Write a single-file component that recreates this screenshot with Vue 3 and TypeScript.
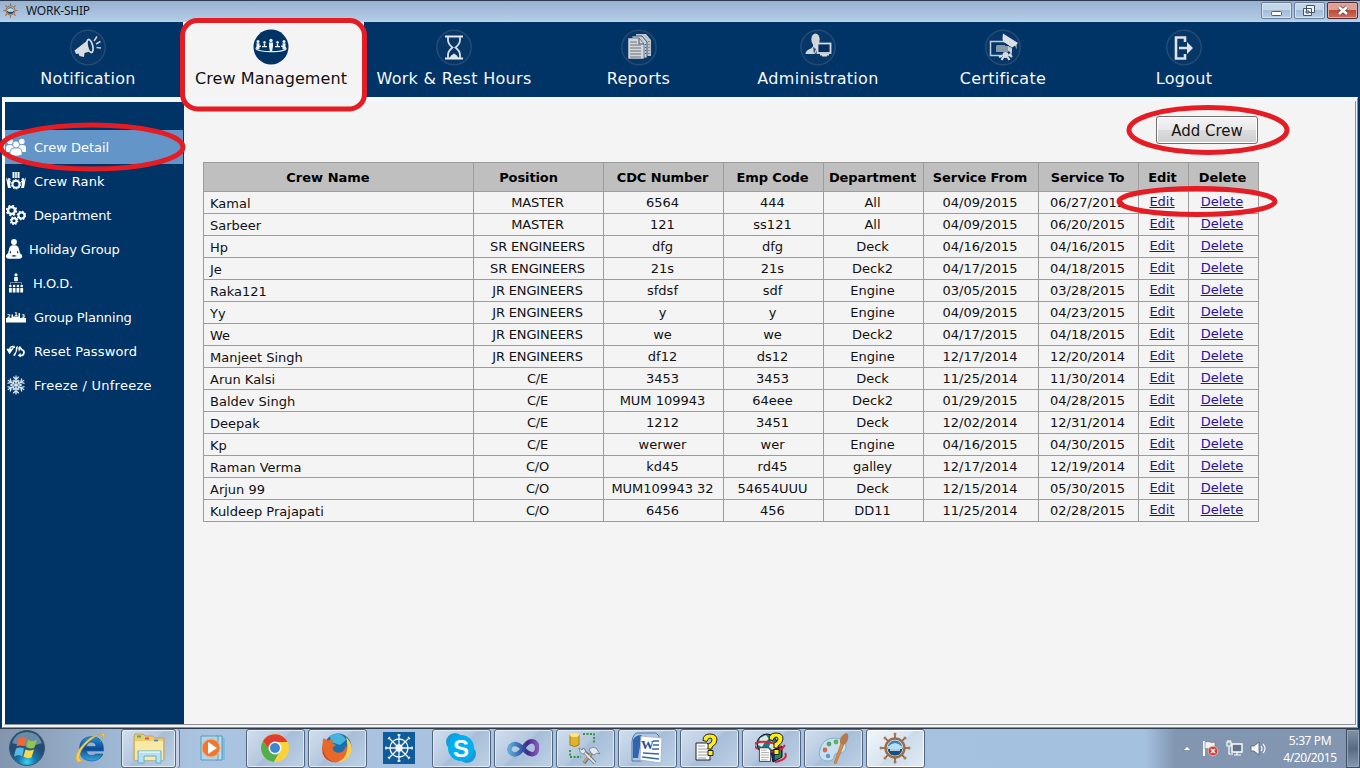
<script setup lang="ts">
interface NavItem { label: string; icon: string; active?: boolean }
interface SideItem { label: string; icon: string; cls?: string }
interface TaskItem { name: string; icon: string; kind: string }

const navItems: NavItem[] = [
  { label: 'Notification', icon: '<path d="M4.500 21.500L18 11L23 21.500L14.500 24L14 28L9.500 27L8.500 24.500L6 25Z" fill="#d9dde2"/><ellipse cx="20" cy="17" rx="3.600" ry="7.600" transform="rotate(-14 20 17)" fill="#d9dde2"/><ellipse cx="20" cy="17" rx="1.800" ry="5.600" transform="rotate(-14 20 17)" fill="#063768"/><path d="M24 12L27 7.500M26 15L30.500 12.500M26.500 18.500L31 19" stroke="#c5cdd6" stroke-width="1.600"/>' },
  { label: 'Crew Management', active: true, icon: '<circle cx="18" cy="18" r="17.500" fill="#003366"/><ellipse cx="18" cy="19.500" rx="15" ry="3.200" fill="none" stroke="#e8eef4" stroke-width="1.200"/><path d="M8 13h20v5.500H8z" fill="#003366"/><g fill="#edf1f5"><circle cx="18" cy="11.500" r="1.700"/><path d="M16 13.500h4v4l-1 5h-2l-1-5z"/><circle cx="5" cy="12.500" r="1.500"/><path d="M3.500 14.200h3v6h-3z"/><circle cx="31" cy="12.500" r="1.500"/><path d="M29.500 14.200h3v6h-3z"/><circle cx="11.500" cy="13.300" r="1.200"/><path d="M10.800 14.500h1.400V17H14v1.200H9V17h1.800zM25.200 14.500h-1.400V17H22v1.200h5V17h-1.800z"/><circle cx="24.500" cy="13.300" r="1.200"/></g>' },
  { label: 'Work & Rest Hours', icon: '<path d="M9 7.500h18M9 29.500h18" stroke="#e6e9ec" stroke-width="2"/><path d="M12 8v3q0 4 4.500 7.500Q12 22 12 26v3M24 8v3q0 4-4.500 7.500Q24 22 24 26v3" fill="none" stroke="#d8dde3" stroke-width="1.800"/><path d="M13.500 29q1-3 4.500-4.500q3.500 1.500 4.500 4.500z" fill="#e1e5e9"/>' },
  { label: 'Reports', icon: '<path d="M15 5h10l5 6v16H15z" fill="#bfc5cb"/><path d="M11 7h10l5 6v16H11z" fill="#c9cdd2" stroke="#183f68" stroke-width=".8"/><path d="M7 9h11l5 6v15H7z" fill="#d5d7da" stroke="#183f68" stroke-width=".6"/><path d="M18 9v6h5" fill="none" stroke="#42566c"/><path d="M9 13h7M9 16h11M9 19h11M9 22h11M9 25h11M9 28h11" stroke="#64717e" stroke-width="1"/><path d="M24.500 15v12M28 12v13" stroke="#4a5d72" stroke-dasharray="1 2"/>' },
  { label: 'Administration', icon: '<ellipse cx="15.500" cy="10.500" rx="4.200" ry="6" fill="#d2d5d8"/><path d="M13 14h5v5l-3 6H5.500q0-4 5.500-5.500l2-2z" fill="#d2d5d8"/><path d="M13 18l3 2-2 5z" fill="#36577a"/><rect x="17.500" y="14.500" width="13" height="9.500" fill="#052f5c" stroke="#d8dbde" stroke-width="1.800"/><path d="M20 25h9v1.500h-9zM22 26h5v1.500h-5z" fill="#d8dbde"/>' },
  { label: 'Certificate', icon: '<path d="M26 20v6.500H5.500v-14H20" fill="none" stroke="#c2cbd3" stroke-width="1.500"/><path d="M12 16h8v1h3v6H11v-6z" fill="#8798a8"/><path d="M18 4.500l15 9.500-1.500 1.500v5l-1.300-4-3.200 2-9-6-.5-3z" fill="#dce0e3"/><path d="M23 17l4 2v5l-4-2z" fill="#c6ced6"/><circle cx="20.500" cy="26" r="3" fill="#d8dde1"/><path d="M18.500 28l-2 3M22.500 28l2 3M24 25l3 3M17 27l-3 1" stroke="#d8dde1" stroke-width="2.200"/>' },
  { label: 'Logout', icon: '<path d="M19 13V8.500h-9v21h9V25" fill="none" stroke="#dfe3e7" stroke-width="2.600"/><path d="M13 17.800h8V13l6 6-6 6v-4.700h-8z" fill="#e0e4e8"/>' }
]

const flakeArm = '<path d="M10 10V.5M7.200 1.800L10 4.500l2.800-2.700M7.500 5L10 7.500 12.500 5"/>'
const flake = [0, 60, 120, 180, 240, 300].map((a) => `<g transform="rotate(${a} 10 10)">${flakeArm}</g>`).join('')

const sideItems: SideItem[] = [
  { label: 'Crew Detail', icon: '<circle cx="4" cy="4.500" r="2.800"/><circle cx="15.800" cy="4.500" r="2.800"/><path d="M0 15V11q0-3 3-3h3l2 3-3 4zM20 15V11q0-3-3-3h-3l-2 3 3 4z"/><g stroke="#6495c8" stroke-width=".8"><circle cx="10" cy="7.500" r="3.500"/><path d="M4 15q0-4 4-4h4q4 0 4 4v3q-6 2.500-12 0z"/></g>' },
  { label: 'Crew Rank', icon: '<path d="M6.500 1h2v6h-2zM9.200 1h1.600v6H9.200zM11.500 1h2v6h-2z"/><circle cx="10" cy="13.200" r="3.500" fill="none" stroke="#fff" stroke-width="2"/><circle cx="10" cy="13.200" r="4.800" fill="none" stroke="#fff" stroke-dasharray="1.600 1.400"/><circle cx="3" cy="8.500" r="1.500"/><circle cx="17" cy="8.500" r="1.500"/><path d="M0 6l2 4h3l-1 3 1 4H2l-1-5zM20 6l-2 4h-3l1 3-1 4h3l1-5z"/>' },
  { label: 'Department', icon: '<g fill="none" stroke="#fff"><circle cx="5.500" cy="5.500" r="3.500" stroke-width="2.400"/><circle cx="5.500" cy="5.500" r="5" stroke-width="1.500" stroke-dasharray="2 1.930"/><circle cx="15.500" cy="10.500" r="3" stroke-width="2"/><circle cx="15.500" cy="10.500" r="4.200" stroke-width="1.300" stroke-dasharray="1.600 1.700"/><circle cx="8" cy="15.800" r="2.500" stroke-width="1.900"/><circle cx="8" cy="15.800" r="3.700" stroke-width="1.300" stroke-dasharray="1.450 1.450"/></g>' },
  { label: 'Holiday Group', cls: 'holiday', icon: '<circle cx="8" cy="3" r="2.900"/><path d="M6.500 6.300h3q3 .7 3.500 4l1 4q3 2 2 4-1 1.500-3 1.500H3q-2 0-3-1.500-1-2 2-4l1-4q.5-3.300 3.500-4z"/><path d="M3.500 13.500L5 11.500v3zM12.500 13.500L11 11.500v3zM5 17l3-1 3 1-3 .8z" fill="#003366"/>' },
  { label: 'H.O.D.', cls: 'hod', icon: '<circle cx="10" cy="1.800" r="1.600"/><path d="M8.200 4h3.600v4H8.200z"/><path d="M10 7v3M4.500 11.500V9.500h11v2" fill="none" stroke="#fff" stroke-width=".7" opacity=".6"/><circle cx="4.300" cy="13" r="1.300"/><circle cx="8.100" cy="13" r="1.300"/><circle cx="11.900" cy="13" r="1.300"/><circle cx="15.700" cy="13" r="1.300"/><path d="M3 15h2.800v4.500H3zM6.700 15h2.800v4.500H6.700zM10.500 15h2.800v4.500h-2.800zM14.300 15h2.800v4.500h-2.800z"/>' },
  { label: 'Group Planning', icon: '<path d="M0 11h6V9.500h8V11h6v4.500H0z"/><g font-family="DejaVu Sans" font-size="5" font-weight="bold"><text x="1" y="10.500">2</text><text x="8.200" y="8.800">1</text><text x="15.500" y="10.500">3</text></g><path d="M5.500 7.500h1.500v4H5.500zM12.500 6h1.500v5h-1.500z"/>' },
  { label: 'Reset Password', icon: '<path d="M8.500 5.500Q4 4.500 3.500 9M1.500 8.500h4.600L3.500 12zM6 7.500L9 6" stroke="#fff" stroke-width="1.300" fill="none"/><path d="M1.200 8.500h5L3.500 12.500zM12 5l-1 5-2 5-2-.7 2.600-3.600L10 6zM14 5l3 4-3-.6-1 2.600-.9-4z"/><path d="M15 8.500q4 1 2.700 4.200Q17 15 13.500 14.500" stroke="#fff" stroke-width="1.800" fill="none"/><path d="M14.500 11.800l-2.700 2.800 3.200 1.600z"/>' },
  { label: 'Freeze / Unfreeze', icon: '<g fill="none" stroke="#dce7f2" stroke-width="1.300">' + flake + '</g>' }
]

const headers: string[] = ['Crew Name', 'Position', 'CDC Number', 'Emp Code', 'Department', 'Service From', 'Service To', 'Edit', 'Delete']
const widths: number[] = [270, 130, 120, 100, 100, 115, 100, 50, 70]
const rows: string[][] = [
  ['Kamal', 'MASTER', '6564', '444', 'All', '04/09/2015', '06/27/2015'],
  ['Sarbeer', 'MASTER', '121', 'ss121', 'All', '04/09/2015', '06/20/2015'],
  ['Hp', 'SR ENGINEERS', 'dfg', 'dfg', 'Deck', '04/16/2015', '04/16/2015'],
  ['Je', 'SR ENGINEERS', '21s', '21s', 'Deck2', '04/17/2015', '04/18/2015'],
  ['Raka121', 'JR ENGINEERS', 'sfdsf', 'sdf', 'Engine', '03/05/2015', '03/28/2015'],
  ['Yy', 'JR ENGINEERS', 'y', 'y', 'Engine', '04/09/2015', '04/23/2015'],
  ['We', 'JR ENGINEERS', 'we', 'we', 'Deck2', '04/17/2015', '04/18/2015'],
  ['Manjeet Singh', 'JR ENGINEERS', 'df12', 'ds12', 'Engine', '12/17/2014', '12/20/2014'],
  ['Arun Kalsi', 'C/E', '3453', '3453', 'Deck', '11/25/2014', '11/30/2014'],
  ['Baldev Singh', 'C/E', 'MUM 109943', '64eee', 'Deck2', '01/29/2015', '04/28/2015'],
  ['Deepak', 'C/E', '1212', '3451', 'Deck', '12/02/2014', '12/31/2014'],
  ['Kp', 'C/E', 'werwer', 'wer', 'Engine', '04/16/2015', '04/30/2015'],
  ['Raman Verma', 'C/O', 'kd45', 'rd45', 'galley', '12/17/2014', '12/19/2014'],
  ['Arjun 99', 'C/O', 'MUM109943 32', '54654UUU', 'Deck', '12/15/2014', '05/30/2015'],
  ['Kuldeep Prajapati', 'C/O', '6456', '456', 'DD11', '11/25/2014', '02/28/2015']
]

const helm = '<g stroke="#80502f" stroke-width="1.500"><path d="M16 1v30M1 16h30M5.500 5.500l21 21M26.500 5.500l-21 21"/></g><g fill="#a97950"><circle cx="16" cy="2" r="1.500"/><circle cx="16" cy="30" r="1.500"/><circle cx="2" cy="16" r="1.500"/><circle cx="30" cy="16" r="1.500"/><circle cx="6" cy="6" r="1.500"/><circle cx="26" cy="6" r="1.500"/><circle cx="6" cy="26" r="1.500"/><circle cx="26" cy="26" r="1.500"/></g><circle cx="16" cy="16" r="9.500" fill="#d6e5ef" stroke="#a06b43" stroke-width="2.400"/><circle cx="16" cy="16" r="7.500" fill="#3683b7"/><path d="M8.500 16h15q-1 7.500-7.500 7.500T8.500 16" fill="#174f81"/><path d="M9 14.500q7-7 14 0v2.500H9z" fill="#b7ddf0"/><path d="M11 18h10" stroke="#e8f3f8" stroke-width="1.500"/>'
const page = '<path d="M3 11h11l3 3v14H3z" fill="#fff" stroke="#222"/><path d="M5 14h7M5 17h10M5 20h10M5 23h10M5 26h8" stroke="#999"/>'
const question = '<path d="M10 8.500q0-6.500 7-6.500t7 6q0 4-5 7v2h-4v-5q4-1 4-4 0-2-2-2t-3 3.500z" fill="#ffee16" stroke="#222"/><path d="M15 18.500h5v5h-5z" fill="#ffee16" stroke="#222"/>'

const tasks: TaskItem[] = [
  { name: 'ie', kind: 'plain', icon: '<defs><linearGradient id="ieBlue" x2="0" y2="1"><stop stop-color="#2595d9"/><stop offset=".5" stop-color="#084b95"/><stop offset="1" stop-color="#32a9df"/></linearGradient></defs><path d="M30 22q-3 7-11.500 7Q6.500 28.500 6.500 17T18 4.500q13 0 12.500 14.500H13.500q.5 4.500 5 4.500 3 0 4-1.500zM13.500 14.500h9.500q-.5-4.500-4.500-4.500t-5 4.500z" fill="url(#ieBlue)" stroke="#17538f" stroke-width=".6"/><path d="M27 10Q33 3 27.500 2.500 19 2 9.500 13T4 29.500q2 2 7-2-4.500 1-4.500-1Q6 18 16 9.500T31 1q2.500 3-4 9z" fill="#f5cc58" stroke="#c89b31" stroke-width=".5"/>' },
  { name: 'explorer', kind: 'button stacked', icon: '<path d="M1 5l1-3h8l2 2h8l2 2h9v22H1z" fill="#eacb74" stroke="#c2a45a"/><path d="M2 9h28v19H2z" fill="#f9e9a5"/><path d="M4 3.500h4v2H4z" fill="#50b44f"/><path d="M12 5.500h4v2h-4z" fill="#d85346"/><path d="M21 7.500h4v2h-4z" fill="#4397cb"/><path d="M5 31V19h23v12h-5v-7H11v7z" fill="#b6e1f2" stroke="#5faed1"/><path d="M6 20h21" stroke="#fff"/>' },
  { name: 'player', kind: 'plain', icon: '<path d="M23 5l5 1v22h-5z" fill="#80bcdc"/><path d="M19 4h6v24h-6z" fill="#b9dded" stroke="#5898bc"/><path d="M4 4h17v24H4z" fill="#aed5e9" stroke="#5d9bbf"/><circle cx="14" cy="16" r="9" fill="#ec792f" stroke="#f6b181"/><path d="M11 10l9 6-9 6z" fill="#fff"/>' },
  { name: 'chrome', kind: 'button', icon: '<circle cx="16" cy="16" r="14" fill="#fad33b"/><path d="M3.900 9A14 14 0 0 1 28.500 10H16l-5 9z" fill="#df3e31"/><path d="M3.900 9A14 14 0 0 0 15 30l6-11H11z" fill="#54ae4d"/><path d="M28.500 10A14 14 0 0 1 15 30l6-11-2-9z" fill="#fad33b"/><circle cx="16" cy="16" r="6.500" fill="#f8faff"/><circle cx="16" cy="16" r="5" fill="#3e87cd"/>' },
  { name: 'firefox', kind: 'button', icon: '<circle cx="17" cy="15" r="13.500" fill="#1b6eaf"/><path d="M9 4Q20-2 25 8l-6 5-9-3z" fill="#45b4df"/><path d="M2.500 6l4 2.500L12 7l-1 4 4 2-3.500 2.500q1 6 7.500 5 5-1 6-7 3 5 0 10l4-8q1 8-5 12-10 6-18 0Q-1 19 2.500 6z" fill="#e8682a"/><path d="M25 5q8 8 5 16-4 9-14 9.500 9-4 10-12 1-7-1-13.500z" fill="#f7d058"/><path d="M2 12q-1 14 11 18Q4 29 1.500 21q-.5-5 .5-9z" fill="#cc3d27"/>' },
  { name: 'wheel', kind: 'plain', icon: '<path d="M0 0h32v32H0z" fill="#105b9c"/><g fill="none" stroke="#f4f8fb" stroke-width="1.300"><circle cx="16" cy="16" r="9"/><circle cx="16" cy="16" r="3"/><path d="M16 2v28M2 16h28M6 6l20 20M26 6L6 26M14.500 3h3M14.500 29h3M3 14.500v3M29 14.500v3M5 7l2-2M25 5l2 2M5 25l2 2M25 27l2-2"/></g>' },
  { name: 'skype', kind: 'button', icon: '<circle cx="10" cy="10" r="9" fill="#1a9bd7"/><circle cx="22" cy="22" r="9" fill="#1a9bd7"/><circle cx="16" cy="16" r="13" fill="#00aff0"/><text x="16" y="25" text-anchor="middle" font-family="Liberation Sans" font-weight="bold" font-size="24" fill="#fff">S</text>' },
  { name: 'studio', kind: 'button', icon: '<defs><linearGradient id="loop"><stop stop-color="#5fa9d8"/><stop offset=".4" stop-color="#3464aa"/><stop offset=".65" stop-color="#412a8b"/><stop offset="1" stop-color="#8256b5"/></linearGradient></defs><path d="M15.500 16Q8 9 3.500 14q-3 5 2 8 5 2 10-5 6-10 12-7 5 4 1 11-5 4-13-5z" fill="none" stroke="url(#loop)" stroke-width="4.500"/>' },
  { name: 'database', kind: 'button', icon: '<path d="M1 3v10q5 3 9 0V3" fill="#dfb42c" stroke="#a77e19"/><ellipse cx="5.500" cy="3" rx="4.500" ry="2" fill="#ffe47a"/><path d="M14 2h11v10M1 18v7h11" fill="none" stroke="#2a9939" stroke-width="1.800" stroke-dasharray="2 1.500"/><path d="M15 31l10-13M13 17l13 14" stroke="#6d7884" stroke-width="3.500"/><path d="M15 30l10-12" stroke="#d5a563" stroke-width="1.800"/><path d="M13 18l13 13" stroke="#eef3f6" stroke-width="1.700"/><path d="M20 17q4-3 7-1l4 6-3-1-3 2-3-2zM10 16l3 2 2-2q3 4 0 6-4 0-5-6z" fill="#e5e9ed" stroke="#6d7984" stroke-width=".8"/>' },
  { name: 'word', kind: 'button', icon: '<path d="M4 2Q4 1 7 1h18l3 3-2 22-17 3H1V10q0-5 3-8z" fill="#aec7e3" stroke="#4e78ac"/><path d="M2 8q2-5 9-5L7 26H2z" fill="#3265ac"/><path d="M10 4l21 2-1 25-21-3z" fill="#fff" stroke="#a7bace"/><text x="10" y="17" font-family="Liberation Serif" font-weight="bold" font-size="13" fill="#244f94">W</text><path d="M22 9h6M22 13h6M21 17h7M12 21l16 1M11 25l17 2" stroke="#3768a7" stroke-width="1.600"/>' },
  { name: 'help', kind: 'button', icon: page + question },
  { name: 'webhelp', kind: 'button', icon: '<circle cx="12" cy="12" r="10" fill="#147a88" stroke="#111"/><path d="M5 6l6-3 3 4-4 3-3 5-4-2zM16 9l6 4-3 6-5-4z" fill="#dde7de"/><path d="M16 19l11-5v11l-9 5z" fill="#172c79" stroke="#111"/><path d="M20 19l6-3v9l-6 3z" fill="#238d54"/><path d="M3 17Q-5 12 4 10q12-1 22 5M8 19q17 3 22-6M20 30q14-3 10-9" fill="none" stroke="#d92242" stroke-width="2"/><g transform="translate(2 7) scale(.8)">' + page + '</g><g transform="translate(4 -1)">' + question + '</g>' },
  { name: 'paint', kind: 'button', icon: '<path d="M3 17Q6 6 18 6q12 1 11 10-1 5-7 5-5 0-5 4t-8 4Q0 27 3 17z" fill="#c9e1ef" stroke="#7eb1ce"/><circle cx="8" cy="18" r="2.400" fill="#d76659"/><circle cx="12" cy="12" r="2.400" fill="#5c9e72"/><circle cx="19" cy="10" r="2.400" fill="#66ad53"/><circle cx="11" cy="24" r="2.200" fill="#569dcd"/><path d="M17 31l7-20 3 1-8 20z" fill="#dc8c38" stroke="#a46333" stroke-width=".5"/><path d="M23 11q-1-7 6-10 3 0 2 6-1 5-5 6z" fill="#b57950"/>' },
  { name: 'ship', kind: 'button current', icon: helm }
]
</script>

<template>
  <main class="desktop">
    <header class="titlebar">
      <svg class="app-logo" viewBox="0 0 32 32" v-html="helm"></svg>
      <span class="app-title">WORK-SHIP</span>
      <div class="window-buttons">
        <button aria-label="Minimize"><svg width="30" height="16"><rect x="9.500" y="8.500" width="10" height="4" rx="1" fill="#fff" stroke="#545e70" /></svg></button>
        <button aria-label="Restore"><svg width="30" height="16"><path d="M11.500 2.500h8v7h-8zM8.500 5.500h8v7h-8z" fill="#eff5fa" stroke="#46546a" /><path d="M11 8h3v2h-3z" fill="#b8cce1" stroke="#46546a" /></svg></button>
        <button class="close" aria-label="Close"><svg width="30" height="16"><path d="M11 4l8 7M19 4l-8 7" stroke="#594650" stroke-width="4.200" /><path d="M11 4l8 7M19 4l-8 7" stroke="#fff" stroke-width="2.600" /></svg></button>
      </div>
    </header>

    <nav class="topnav">
      <a v-for="item in navItems" :key="item.label" :class="['nav-item', { active: item.active }]">
        <svg class="nav-icon" viewBox="0 0 36 37">
          <circle v-if="!item.active" cx="18" cy="18.500" r="17.200" fill="#063767" stroke="#234b75" stroke-width="1.500" />
          <g v-html="item.icon"></g>
        </svg>
        <span>{{ item.label }}</span>
      </a>
    </nav>

    <section class="workspace">
      <aside class="sidebar">
        <a v-for="(item, i) in sideItems" :key="item.label" :class="['side-item', item.cls, { selected: i === 0 }]">
          <svg viewBox="0 0 20 20" v-html="item.icon"></svg><span>{{ item.label }}</span>
        </a>
      </aside>
      <div class="content">
        <div class="actions"><button class="add">Add Crew</button></div>
        <table>
          <colgroup><col v-for="(w, i) in widths" :key="i" :style="{ width: w + 'px' }"></colgroup>
          <thead><tr><th v-for="h in headers" :key="h">{{ h }}</th></tr></thead>
          <tbody>
            <tr v-for="row in rows" :key="row[0]">
              <td v-for="(cell, i) in row" :key="i">{{ cell }}</td>
              <td class="link"><a>Edit</a></td><td class="link"><a>Delete</a></td>
            </tr>
          </tbody>
        </table>
      </div>
    </section>

    <footer class="taskbar">
      <div class="start">
        <svg viewBox="0 0 38 38">
          <defs><radialGradient id="orb" cy=".9"><stop stop-color="#37d4ef" /><stop offset=".5" stop-color="#1677aa" /><stop offset="1" stop-color="#234c72" /></radialGradient></defs>
          <circle cx="19" cy="19" r="17.500" fill="url(#orb)" stroke="#365773" /><path d="M4 14Q8 3 19 3t15 11Q20 20 4 14" fill="#c0d8e4" opacity=".45" />
          <path d="M10.500 9.500q4-3 8 0l-2 8q-4-2-8 0z" fill="#f0673a" /><path d="M20 10.500q4 3 9 0l-2.500 8q-4 2-8.500-.5z" fill="#8ec54d" /><path d="M8 19.500q4-2 8 0l-2 8q-3-3-8 0z" fill="#5cb8e5" /><path d="M17.500 20.500q4 2 8.500 0l-2.500 8q-4 2-8-1z" fill="#f9d64c" />
        </svg>
      </div>
      <div v-for="task in tasks" :key="task.name" class="slot"><div :class="['task', task.kind]"><svg viewBox="0 0 32 32" v-html="task.icon"></svg></div></div>
      <div class="tray">
        <svg class="up" viewBox="0 0 8 5"><path d="M0 4.500L4 .5l4 4z" fill="#fff" stroke="#526579" stroke-width=".5" /></svg>
        <svg class="flag" viewBox="0 0 17 17"><path d="M2 1v15" stroke="#fff" stroke-width="2" /><path d="M3 2q3-1 5 0t5 0v7q-3 1-5 0t-5 0z" fill="#eef2f5" stroke="#647083" stroke-width=".6" /><circle cx="11" cy="11" r="4.800" fill="#d93a34" stroke="#f0b3ab" /><path d="M9 9l4 4M13 9l-4 4" stroke="#fff" stroke-width="1.500" /></svg>
        <svg class="network" viewBox="0 0 17 17"><path d="M6 4h10v8H6z" fill="#64758a" stroke="#fff" stroke-width="1.400" /><path d="M8 15h7M11 12v3M1 2h4v4H1zM2 0v2M4 0v2M3 6v8h4" stroke="#fff" fill="none" stroke-width="1.200" /></svg>
        <svg class="sound" viewBox="0 0 17 17"><path d="M1 6h3l5-4v13l-5-4H1z" fill="#f7f9fb" stroke="#4f6073" stroke-width=".8" /><path d="M11 6q2 2.500 0 5M13 4q4 4.500 0 9" fill="none" stroke="#f4f7fa" stroke-width="1.200" /></svg>
        <div class="clock"><span>5:37 PM</span><span>4/20/2015</span></div>
        <div class="show-desktop"></div>
      </div>
    </footer>

    <svg class="annotations" viewBox="0 0 1360 768">
      <rect x="182.500" y="20.500" width="182" height="88.500" rx="15" />
      <ellipse cx="92" cy="147" rx="91" ry="22" />
      <ellipse cx="1208" cy="130" rx="79" ry="22.500" />
      <ellipse cx="1197" cy="201.500" rx="78" ry="13" />
    </svg>
  </main>
</template>

<style>
body { margin: 0; overflow: hidden; }
</style>
<style scoped>
* { box-sizing: border-box; }
.desktop { position: relative; width: 1360px; height: 768px; background: #003366; overflow: hidden; display: flex; flex-direction: column; font-family: "DejaVu Sans", sans-serif; }
.titlebar { height: 22px; border-top: 1px solid #2b3a50; background: linear-gradient(#96b1d1, #b2cbe5 90%, #b8d7ea); display: flex; align-items: center; padding: 0 2px 0 3px; }
.app-logo { width: 15px; height: 15px; margin-bottom: 2px; }
.app-title { margin-left: 8px; padding-bottom: 2px; font: 12px "Noto Sans", sans-serif; letter-spacing: -.25px; color: #111722; }
.window-buttons { display: flex; gap: 2px; margin-left: auto; align-self: flex-start; padding-top: 1px; }
.window-buttons button { display: block; width: 31px; height: 17px; padding: 0; border: 1px solid #6b809d; border-radius: 2px; background: linear-gradient(#c5d6e9 48%, #a3bcd8 50%, #b9cee4); box-shadow: inset 0 0 0 1px #d5e2ef; overflow: hidden; }
.window-buttons svg { display: block; }
.window-buttons .close { border-color: #552a39; background: linear-gradient(#dda194 48%, #be4936 50%, #cb715c); box-shadow: inset 0 0 0 1px #e7aaa0; }
.topnav { height: 75px; flex: none; display: grid; grid-template-columns: 183px 181px 180px 189px 170px 200px 162px; background: #003366; }
.nav-item { display: flex; flex-direction: column; align-items: center; color: #f6f8fa; padding-top: 7px; font-size: 16px; letter-spacing: .3px; white-space: nowrap; }
.nav-item:first-child { padding-right: 7px; }
.nav-item.active { background: #f4f4f4; color: #111; padding-right: 5px; letter-spacing: .08px; }
.nav-icon { width: 36px; height: 37px; display: block; }
.nav-item span { line-height: 22px; margin-top: 2px; }
.workspace { height: 631px; margin: 0 2px; flex: none; display: flex; background: #f4f4f4; border-top: 5px solid #f3f6fa; border-left: 3px solid #fff; border-bottom: 4px double #8d9299; border-right: 3px double #888e95; }
.sidebar { width: 179px; height: 622px; padding-top: 28px; background: #003366; }
.side-item { width: 178px; height: 34px; padding-left: 1px; display: flex; align-items: center; color: #fff; font-size: 13px; letter-spacing: .15px; }
.side-item svg { width: 20px; height: 20px; margin-right: 8px; fill: #fff; flex: none; }
.side-item.selected { background: #6495c8; letter-spacing: 0; }
.side-item.holiday { letter-spacing: -.15px; }
.side-item.holiday svg { margin-right: 3px; }
.side-item.hod { letter-spacing: -.3px; }
.side-item.hod svg { margin-right: 7px; }
.side-item:nth-child(3), .side-item:nth-child(6) { letter-spacing: -.15px; }
.side-item:nth-child(8) { letter-spacing: .27px; }
.content { flex: 1; padding-left: 19px; }
.actions { height: 60px; padding: 14px 0 0 953px; }
.add { display: block; width: 102px; height: 28px; padding: 1px 0 0; border: 1px solid #707070; border-radius: 3px; box-shadow: inset 0 0 0 1px #fff; background: linear-gradient(#f3f3f3, #e9e9e9 48%, #dcdcdc 50%, #cecece); color: #151515; font: 15px "DejaVu Sans", sans-serif; }
table { table-layout: fixed; width: 1056px; border-spacing: 0; border-top: 1px solid #9c9c9c; border-left: 1px solid #9c9c9c; font-size: 13px; color: #111; }
th, td { padding: 0 2px 0 0; border-right: 1px solid #9c9c9c; border-bottom: 1px solid #9c9c9c; text-align: center; white-space: nowrap; line-height: 15px; }
th { height: 29px; background: #bfbfbf; color: #000; letter-spacing: -.1px; }
td { height: 22px; }
th:nth-child(1) { padding-right: 21px; letter-spacing: 0; }
th:nth-child(2) { padding-right: 20px; }
td:nth-child(1) { text-align: left; padding-left: 6px; padding-top: 2px; }
td:nth-child(2) { letter-spacing: -.15px; }
td.link { padding-right: 3px; padding-bottom: 2px; }
.link a { color: #26139a; text-decoration: underline; }
.taskbar { height: 40px; flex: none; display: flex; border-top: 1px solid #303b4c; background: linear-gradient(90deg, #8295af, #9db6d2 110px, #a9c3e0 200px, #a5c1e0 1145px, #8296b1 1175px, #8296b1); }
.start { width: 58px; flex: none; padding-left: 8px; }
.start svg { width: 38px; height: 38px; display: block; }
.slot { width: 62px; flex: none; display: flex; justify-content: center; }
.task { width: 59px; height: 39px; display: flex; justify-content: center; align-items: center; }
.task svg { width: 32px; height: 32px; margin-bottom: 2px; }
.button { border: 1px solid #52657e; border-radius: 3px; box-shadow: inset 0 0 0 1px #dfebf6; background: linear-gradient(135deg, #d2dfed, #b5c8df 45%, #a7bed9 50%, #bed1e5); }
.stacked { width: 55px; margin-right: 5px; box-shadow: inset 0 0 0 1px #e3edf7, 3px 0 0 #c2d2e4, 4px 0 0 #60748c; }
.current { background: linear-gradient(135deg, #f3f7fb, #d7e3ef 50%, #cbdbea 52%, #e2ecf5); box-shadow: inset 0 0 0 1px #fff; }
.tray { margin-left: auto; display: flex; align-items: center; color: #fff; }
.up { width: 8px; height: 5px; margin-right: 11px; }
.flag, .network, .sound { width: 17px; height: 17px; }
.network { margin: 0 7px; }
.clock { width: 68px; margin-left: 9px; display: flex; flex-direction: column; align-items: center; font: 12px/17px "Noto Sans", sans-serif; letter-spacing: -.4px; }
.show-desktop { width: 14px; height: 39px; margin-left: 2px; border: 1px solid #3d4d62; box-shadow: inset 0 0 0 1px #92a4b9; background: linear-gradient(#8393a8, #566a83 50%, #8698ae); }
.annotations { position: absolute; inset: 0; pointer-events: none; fill: none; stroke: #e51c24; stroke-width: 5; }
</style>
